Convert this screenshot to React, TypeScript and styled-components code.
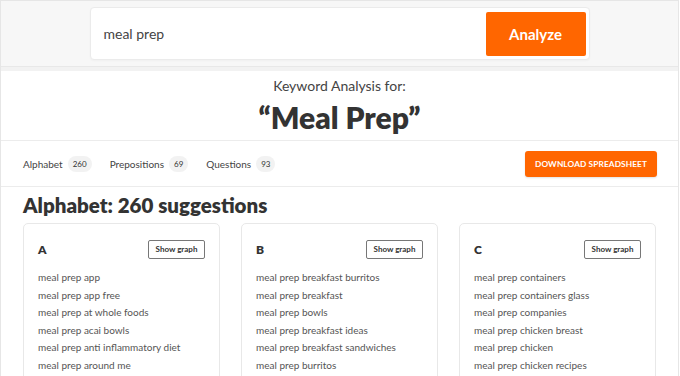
import React from "react";
import styled, { createGlobalStyle } from "styled-components";

const Global = createGlobalStyle`
  html, body { margin: 0; padding: 0; background: #ffffff; }
  body { font-family: "Lato", "Open Sans", sans-serif; color: #333; -webkit-font-smoothing: antialiased; }
  * { box-sizing: border-box; }
`;

const Frame = styled.div`
  width: 679px;
  height: 376px;
  overflow: hidden;
  border: 1px solid #e6e6e6;
  border-bottom: none;
  background: #fff;
`;

const SearchBand = styled.div`
  background: #f7f7f7;
  padding: 6px 0 6px;
  display: flex;
  justify-content: center;
  border-bottom: 1px solid #e8e8e8;
`;

const SearchBox = styled.div`
  width: 500px;
  height: 53px;
  background: #fff;
  border: 1px solid #ebebeb;
  border-radius: 4px;
  display: flex;
  align-items: center;
  padding: 4px 3px 4px 13px;
  box-shadow: 0 1px 2px rgba(0, 0, 0, 0.03);
`;

const QueryText = styled.div`
  flex: 1;
  font-size: 14px;
  color: #444;
`;

const AnalyzeButton = styled.button`
  width: 100px;
  height: 44px;
  border: none;
  border-radius: 2px;
  background: #ff6600;
  color: #fff;
  font-family: inherit;
  font-size: 15px;
  font-weight: 700;
`;

const Strip = styled.div`
  height: 4px;
  background: #f2f2f2;
`;

const Heading = styled.div`
  display: flex;
  flex-direction: column;
  align-items: center;
  padding-top: 6px;
  height: 70px;
  border-bottom: 1px solid #ececec;
`;

const SubTitle = styled.div`
  font-size: 14px;
  color: #444;
  line-height: 17px;
`;

const Title = styled.h1`
  margin: 6px 0 0;
  font-size: 30px;
  font-weight: 800;
  color: #333;
  line-height: 34px;
`;

const TabsRow = styled.div`
  height: 46px;
  display: flex;
  align-items: center;
  padding: 0 21px 0 22px;
  border-bottom: 1px solid #ececec;
`;

const Tab = styled.div`
  display: flex;
  align-items: center;
  gap: 5px;
  font-size: 10px;
  color: #444;
  margin-right: 18px;
`;

const Badge = styled.span`
  display: inline-flex;
  align-items: center;
  justify-content: center;
  height: 16px;
  padding: 0 5px;
  border-radius: 8px;
  background: #f2f2f2;
  font-size: 8px;
  color: #333;
`;

const Spacer = styled.div`
  flex: 1;
`;

const DownloadButton = styled.button`
  width: 132px;
  height: 26px;
  border: none;
  border-radius: 3px;
  background: #ff6600;
  color: #fff;
  font-family: inherit;
  font-size: 8.3px;
  font-weight: 700;
  letter-spacing: 0.1px;
  box-shadow: 0 1px 2px rgba(0, 0, 0, 0.12);
`;

const Section = styled.div`
  padding: 6px 22px 0 22px;
`;

const SectionTitle = styled.h2`
  margin: 0;
  font-size: 20.5px;
  font-weight: 800;
  color: #333;
  line-height: 25px;
`;

const Cards = styled.div`
  margin-top: 5px;
  display: grid;
  grid-template-columns: repeat(3, 197px);
  gap: 21px;
`;

const Card = styled.div`
  border: 1px solid #e8e8e8;
  border-radius: 5px;
  padding: 15px 14px 0 14px;
  height: 200px;
`;

const CardHeader = styled.div`
  display: flex;
  align-items: center;
  justify-content: space-between;
  height: 20px;
  margin-bottom: 10px;
`;

const Letter = styled.div`
  font-size: 12px;
  font-weight: 800;
  color: #333;
`;

const GraphButton = styled.button`
  width: 57px;
  height: 19px;
  padding: 0;
  background: #fff;
  border: 1px solid #777;
  border-radius: 2px;
  font-family: inherit;
  font-size: 8px;
  font-weight: 700;
  color: #333;
`;

const List = styled.ul`
  list-style: none;
  margin: 0;
  padding: 0;
`;

const Item = styled.li`
  font-size: 10px;
  line-height: 17.6px;
  color: #555;
`;

const groups: { letter: string; items: string[] }[] = [
  {
    letter: "A",
    items: [
      "meal prep app",
      "meal prep app free",
      "meal prep at whole foods",
      "meal prep acai bowls",
      "meal prep anti inflammatory diet",
      "meal prep around me",
    ],
  },
  {
    letter: "B",
    items: [
      "meal prep breakfast burritos",
      "meal prep breakfast",
      "meal prep bowls",
      "meal prep breakfast ideas",
      "meal prep breakfast sandwiches",
      "meal prep burritos",
    ],
  },
  {
    letter: "C",
    items: [
      "meal prep containers",
      "meal prep containers glass",
      "meal prep companies",
      "meal prep chicken breast",
      "meal prep chicken",
      "meal prep chicken recipes",
    ],
  },
];

export default function App() {
  return (
    <>
      <Global />
      <Frame>
        <SearchBand>
          <SearchBox>
            <QueryText>meal prep</QueryText>
            <AnalyzeButton>Analyze</AnalyzeButton>
          </SearchBox>
        </SearchBand>
        <Strip />
        <Heading>
          <SubTitle>Keyword Analysis for:</SubTitle>
          <Title>“Meal Prep”</Title>
        </Heading>
        <TabsRow>
          <Tab>
            Alphabet <Badge>260</Badge>
          </Tab>
          <Tab>
            Prepositions <Badge>69</Badge>
          </Tab>
          <Tab>
            Questions <Badge>93</Badge>
          </Tab>
          <Spacer />
          <DownloadButton>DOWNLOAD SPREADSHEET</DownloadButton>
        </TabsRow>
        <Section>
          <SectionTitle>Alphabet: 260 suggestions</SectionTitle>
          <Cards>
            {groups.map((g) => (
              <Card key={g.letter}>
                <CardHeader>
                  <Letter>{g.letter}</Letter>
                  <GraphButton>Show graph</GraphButton>
                </CardHeader>
                <List>
                  {g.items.map((it) => (
                    <Item key={it}>{it}</Item>
                  ))}
                </List>
              </Card>
            ))}
          </Cards>
        </Section>
      </Frame>
    </>
  );
}
